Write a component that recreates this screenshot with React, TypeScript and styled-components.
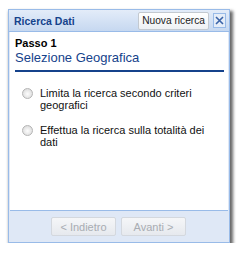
import React from "react";
import styled, { createGlobalStyle } from "styled-components";

const Global = createGlobalStyle`
  html, body { margin: 0; padding: 0; background: #fff; }
  body { font-family: "DejaVu Sans", "Liberation Sans", sans-serif; }
`;

const Page = styled.div`
  padding: 9px 0 0 8px;
`;

const Win = styled.div`
  width: 220px;
  height: 232px;
  border: 1px solid #99bbe8;
  background: #dfe8f6;
  display: flex;
  flex-direction: column;
  box-shadow: 2px 3px 3px 1px rgba(0, 0, 0, 0.6);
`;

const Header = styled.div`
  height: 21px;
  display: flex;
  align-items: center;
  padding: 0 3px 0 5px;
  background: linear-gradient(#e3ecf9, #c6d8f0);
  border-bottom: 1px solid #99bbe8;
`;

const Title = styled.div`
  flex: 1;
  font: bold 10.5px "Liberation Sans", Arial, sans-serif;
  color: #15428b;
`;

const HeadButton = styled.div`
  height: 16px;
  padding: 0 3px;
  display: flex;
  align-items: center;
  border: 1px solid #c3c9d0;
  border-radius: 2px;
  background: linear-gradient(#ffffff, #eef1f4);
  font: 10.2px "Liberation Sans", Arial, sans-serif;
  color: #222;
  margin-right: 4px;
`;

const CloseBtn = styled.div`
  width: 11px;
  height: 13px;
  border: 1px solid #99bbe8;
  background: #e5edf8;
  display: flex;
  align-items: center;
  justify-content: center;
`;

const Body = styled.div`
  flex: 1;
  background: #fff;
  margin: 0 1px;
  padding: 5px 4px 0 5px;
  border-bottom: 1px solid #99bbe8;
`;

const Step = styled.div`
  font: bold 11px "Liberation Sans", Arial, sans-serif;
  color: #000;
  line-height: 13px;
`;

const Heading = styled.div`
  font: 13px "Liberation Sans", Arial, sans-serif;
  color: #15428b;
  line-height: 16px;
  padding-bottom: 4px;
  border-bottom: 2px solid #15428b;
`;

const Options = styled.div`
  display: flex;
  flex-direction: column;
  gap: 13px;
  padding: 15px 0 0 7px;
`;

const Option = styled.label`
  display: flex;
  align-items: flex-start;
  gap: 7px;
  font: 11px "Liberation Sans", Arial, sans-serif;
  color: #111;
  line-height: 12px;
`;

const Radio = styled.span`
  flex: none;
  width: 11px;
  height: 11px;
  margin-top: 1px;
  border-radius: 50%;
  border: 1px solid #b5b5b5;
  background: radial-gradient(circle at 50% 55%, #fdfdfd 0, #e4e4e4 60%, #cfcfcf 100%);
  box-sizing: border-box;
`;

const Footer = styled.div`
  height: 31px;
  display: flex;
  align-items: center;
  justify-content: center;
  gap: 5px;
  padding-right: 1px;
`;

const NavBtn = styled.div`
  width: 63px;
  height: 17px;
  display: flex;
  align-items: center;
  justify-content: center;
  border: 1px solid #d4d8de;
  border-radius: 2px;
  background: linear-gradient(#f5f6f8, #e6e9ee);
  font: 11px "Liberation Sans", Arial, sans-serif;
  color: #a8acb2;
`;

export default function App() {
  return (
    <Page>
      <Global />
      <Win>
        <Header>
          <Title>Ricerca Dati</Title>
          <HeadButton>Nuova ricerca</HeadButton>
          <CloseBtn>
            <svg width="9" height="9" viewBox="0 0 9 9">
              <path d="M1 1L8 8M8 1L1 8" stroke="#3b64a8" strokeWidth="1.6" />
            </svg>
          </CloseBtn>
        </Header>
        <Body>
          <Step>Passo 1</Step>
          <Heading>Selezione Geografica</Heading>
          <Options>
            <Option>
              <Radio />
              <span>Limita la ricerca secondo criteri geografici</span>
            </Option>
            <Option>
              <Radio />
              <span>Effettua la ricerca sulla totalità dei dati</span>
            </Option>
          </Options>
        </Body>
        <Footer>
          <NavBtn>&lt; Indietro</NavBtn>
          <NavBtn>Avanti &gt;</NavBtn>
        </Footer>
      </Win>
    </Page>
  );
}
